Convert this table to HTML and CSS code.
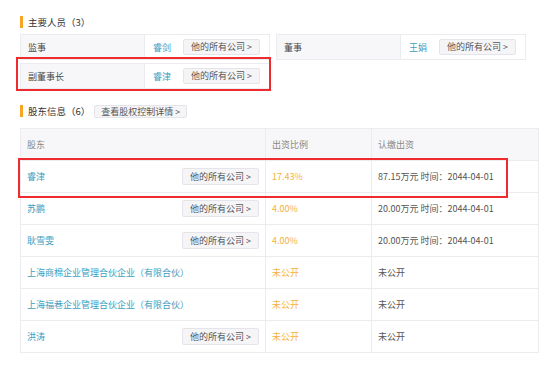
FILE: index.html
```html
<!DOCTYPE html>
<html lang="zh-CN">
  <head>
    <meta charset="UTF-8" />
    <title>企业信息</title>
    <link rel="stylesheet" href="styles.css">
  </head>
  <body>
    <div class="page">
      <div class="section-title">
        <span class="bar"></span>主要人员（3）
      </div>
      <div class="people">
        <div class="person">
          <div class="role">监事</div>
          <div class="person-info">
            <a class="name">睿剑</a>
            <span class="btn">他的所有公司 &gt;</span>
          </div>
        </div>
        <div class="person">
          <div class="role">董事</div>
          <div class="person-info">
            <a class="name">王娟</a>
            <span class="btn">他的所有公司 &gt;</span>
          </div>
        </div>
        <div class="person">
          <div class="role">副董事长</div>
          <div class="person-info">
            <a class="name">睿津</a>
            <span class="btn">他的所有公司 &gt;</span>
          </div>
        </div>
      </div>

      <div class="section-title second">
        <span class="bar"></span>股东信息（6）
        <span class="btn detail">查看股权控制详情 &gt;</span>
      </div>
      <table class="holders">
        <thead>
          <tr>
            <th class="col-name">股东</th>
            <th class="col-ratio">出资比例</th>
            <th>认缴出资</th>
          </tr>
        </thead>
        <tbody>
          <tr>
            <td><div class="holder"><a class="name">睿津</a><span class="btn">他的所有公司 &gt;</span></div></td>
            <td class="ratio">17.43%</td>
            <td>87.15万元 时间：2044-04-01</td>
          </tr>
          <tr>
            <td><div class="holder"><a class="name">苏鹏</a><span class="btn">他的所有公司 &gt;</span></div></td>
            <td class="ratio">4.00%</td>
            <td>20.00万元 时间：2044-04-01</td>
          </tr>
          <tr>
            <td><div class="holder"><a class="name">耿雪雯</a><span class="btn">他的所有公司 &gt;</span></div></td>
            <td class="ratio">4.00%</td>
            <td>20.00万元 时间：2044-04-01</td>
          </tr>
          <tr>
            <td><div class="holder"><a class="name">上海商棉企业管理合伙企业（有限合伙）</a></div></td>
            <td class="ratio">未公开</td>
            <td>未公开</td>
          </tr>
          <tr>
            <td><div class="holder"><a class="name">上海福巷企业管理合伙企业（有限合伙）</a></div></td>
            <td class="ratio">未公开</td>
            <td>未公开</td>
          </tr>
          <tr>
            <td><div class="holder"><a class="name">洪涛</a><span class="btn">他的所有公司 &gt;</span></div></td>
            <td class="ratio">未公开</td>
            <td>未公开</td>
          </tr>
        </tbody>
      </table>

      <div class="highlight highlight-person"></div>
      <div class="highlight highlight-holder"></div>
    </div>
  </body>
</html>
```

FILE: styles.css
```css
body {
  margin: 0;
  background-color: #ffffff;
  font-family: "Noto Sans CJK SC", "Noto Sans", sans-serif;
  font-size: 9px;
  color: #555;
  text-spacing-trim: space-all;
}
.page {
  position: relative;
  width: 557px;
  height: 370px;
  padding: 14px 0 0 20px;
  box-sizing: border-box;
}
.section-title {
  display: flex;
  align-items: center;
  height: 16px;
  color: #333;
  font-size: 9.5px;
}
.section-title.second {
  margin-top: 14px;
}
.bar {
  width: 3px;
  height: 12px;
  background-color: #f5a623;
  margin-right: 5px;
}
.people {
  display: grid;
  grid-template-columns: 250px 250px;
  column-gap: 6px;
  row-gap: 3px;
  margin-top: 4px;
}
.person {
  display: flex;
  height: 26px;
  border: 1px solid #ebebf0;
  box-sizing: border-box;
}
.role {
  width: 124px;
  background-color: #f7f7f9;
  border-right: 1px solid #ebebf0;
  padding-left: 7px;
  display: flex;
  align-items: center;
  box-sizing: border-box;
  color: #4a4a4a;
}
.person-info {
  display: flex;
  align-items: center;
  padding-left: 8px;
}
.name {
  color: #3e9dc0;
  text-decoration: none;
  white-space: nowrap;
}
.person-info .name {
  width: 30px;
}
.btn {
  display: inline-block;
  height: 16px;
  line-height: 14px;
  padding: 0 7px;
  font-size: 9px;
  color: #555;
  background-color: #f5f5f8;
  border: 1px solid #e4e4ea;
  border-radius: 2px;
  box-sizing: border-box;
  white-space: nowrap;
}
.detail {
  margin-left: 4px;
  height: 13px;
  line-height: 11px;
  padding: 0 6px;
}
.holders {
  margin-top: 9px;
  width: 519px;
  border-collapse: collapse;
  table-layout: fixed;
}
.holders th,
.holders td {
  height: 31px;
  border: 1px solid #ebebf0;
  padding: 0 6px;
  text-align: left;
  font-weight: normal;
  white-space: nowrap;
}
.holders th {
  background-color: #f7f7f9;
  color: #888;
}
.col-name {
  width: 232px;
}
.col-ratio {
  width: 93px;
}
.holder {
  display: flex;
  align-items: center;
  justify-content: space-between;
}
.holder .btn {
  height: 17px;
  line-height: 15px;
}
.ratio {
  color: #f5b23b;
}
.highlight {
  position: absolute;
  border: 2px solid #ee2b2f;
  box-sizing: border-box;
}
.highlight-person {
  left: 16px;
  top: 57px;
  width: 255px;
  height: 34px;
}
.highlight-holder {
  left: 18px;
  top: 158px;
  width: 490px;
  height: 40px;
}
```
